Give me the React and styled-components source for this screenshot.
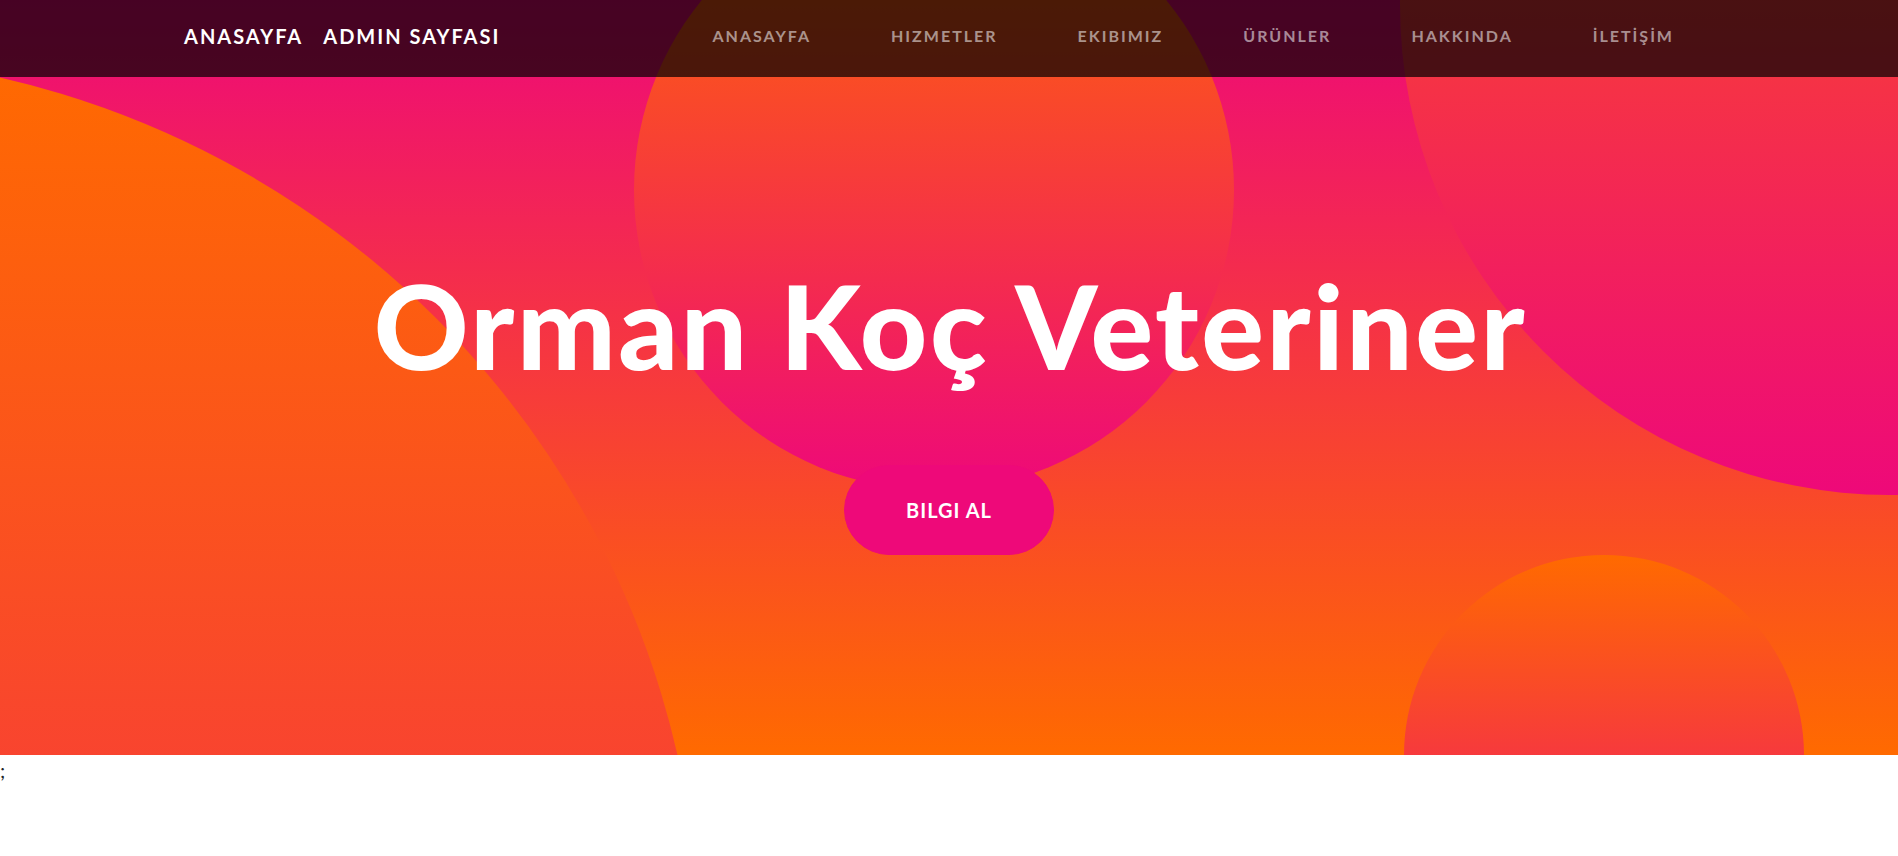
import React from "react";
import styled, { createGlobalStyle } from "styled-components";

const GlobalStyle = createGlobalStyle`
  html, body {
    margin: 0;
    padding: 0;
  }
  body {
    font-family: "Lato", "Liberation Sans", sans-serif;
    font-size: 20px;
    line-height: 1.5;
    color: #212529;
    background: #ffffff;
  }
`;

const Navbar = styled.nav`
  position: absolute;
  top: 0;
  left: 0;
  right: 0;
  z-index: 10;
  height: 77px;
  box-sizing: border-box;
  padding-bottom: 5px;
  display: flex;
  align-items: center;
  background-color: rgba(0, 0, 0, 0.7);
`;

const NavContainer = styled.div`
  width: 100%;
  box-sizing: border-box;
  padding: 0 184px;
  display: flex;
  align-items: center;
  justify-content: space-between;
`;

const BrandGroup = styled.div`
  display: flex;
  align-items: center;
`;

const Brand = styled.a`
  margin-right: 20px;
  color: #ffffff;
  font-size: 20px;
  font-weight: 700;
  letter-spacing: 2px;
  text-transform: uppercase;
  text-decoration: none;
  cursor: pointer;
`;

const NavList = styled.ul`
  display: flex;
  list-style: none;
  margin: 0;
  padding: 0;
`;

const NavLink = styled.a`
  display: block;
  padding: 0 40px;
  color: rgba(255, 255, 255, 0.55);
  font-size: 16px;
  font-weight: 700;
  letter-spacing: 2px;
  text-transform: uppercase;
  text-decoration: none;
  cursor: pointer;
`;

const Masthead = styled.header`
  position: relative;
  overflow: hidden;
  height: 755px;
  text-align: center;
  background: linear-gradient(0deg, #ff6a00 0%, #ee0979 100%);
`;

const Circle = styled.div`
  position: absolute;
  left: ${(p) => p.$left}px;
  top: ${(p) => p.$top}px;
  width: ${(p) => p.$size}px;
  height: ${(p) => p.$size}px;
  border-radius: 50%;
  background: linear-gradient(0deg, #ee0979 0%, #ff6a00 100%);
`;

const Content = styled.div`
  position: relative;
  z-index: 1;
  padding-top: 267px;
  display: flex;
  flex-direction: column;
  align-items: center;
`;

const Heading = styled.h1`
  margin: 0;
  padding-left: 3px;
  color: #ffffff;
  font-family: "Lato", "Liberation Sans", sans-serif;
  font-weight: 900;
  font-size: 117px;
  line-height: 1;
  letter-spacing: 2.6px;
`;

const CtaButton = styled.a`
  margin-top: 81px;
  display: inline-block;
  padding: 29px 61px;
  color: #ffffff;
  background: #ee0979;
  border: 1px solid #ee0979;
  border-radius: 50rem;
  font-size: 20px;
  line-height: 30px;
  font-weight: 700;
  letter-spacing: 1px;
  text-transform: uppercase;
  text-decoration: none;
  cursor: pointer;
`;

const Leftover = styled.div`
  font-size: 20px;
  line-height: 1.5;
`;

const links = ["ANASAYFA", "HIZMETLER", "EKIBIMIZ", "ÜRÜNLER", "HAKKINDA", "İLETİŞİM"];

export default function App() {
  return (
    <>
      <GlobalStyle />
      <Navbar>
        <NavContainer>
          <BrandGroup>
            <Brand>ANASAYFA</Brand>
            <Brand>ADMIN SAYFASI</Brand>
          </BrandGroup>
          <NavList>
            {links.map((l) => (
              <li key={l}>
                <NavLink>{l}</NavLink>
              </li>
            ))}
          </NavList>
        </NavContainer>
      </Navbar>
      <Masthead>
        <Circle $size={1800} $left={-1100} $top={55} />
        <Circle $size={980} $left={1400} $top={-485} />
        <Circle $size={400} $left={1404} $top={555} />
        <Circle $size={600} $left={634} $top={-110} />
        <Content>
          <Heading>Orman Koç Veteriner</Heading>
          <CtaButton>BILGI AL</CtaButton>
        </Content>
      </Masthead>
      <Leftover>;</Leftover>
    </>
  );
}
